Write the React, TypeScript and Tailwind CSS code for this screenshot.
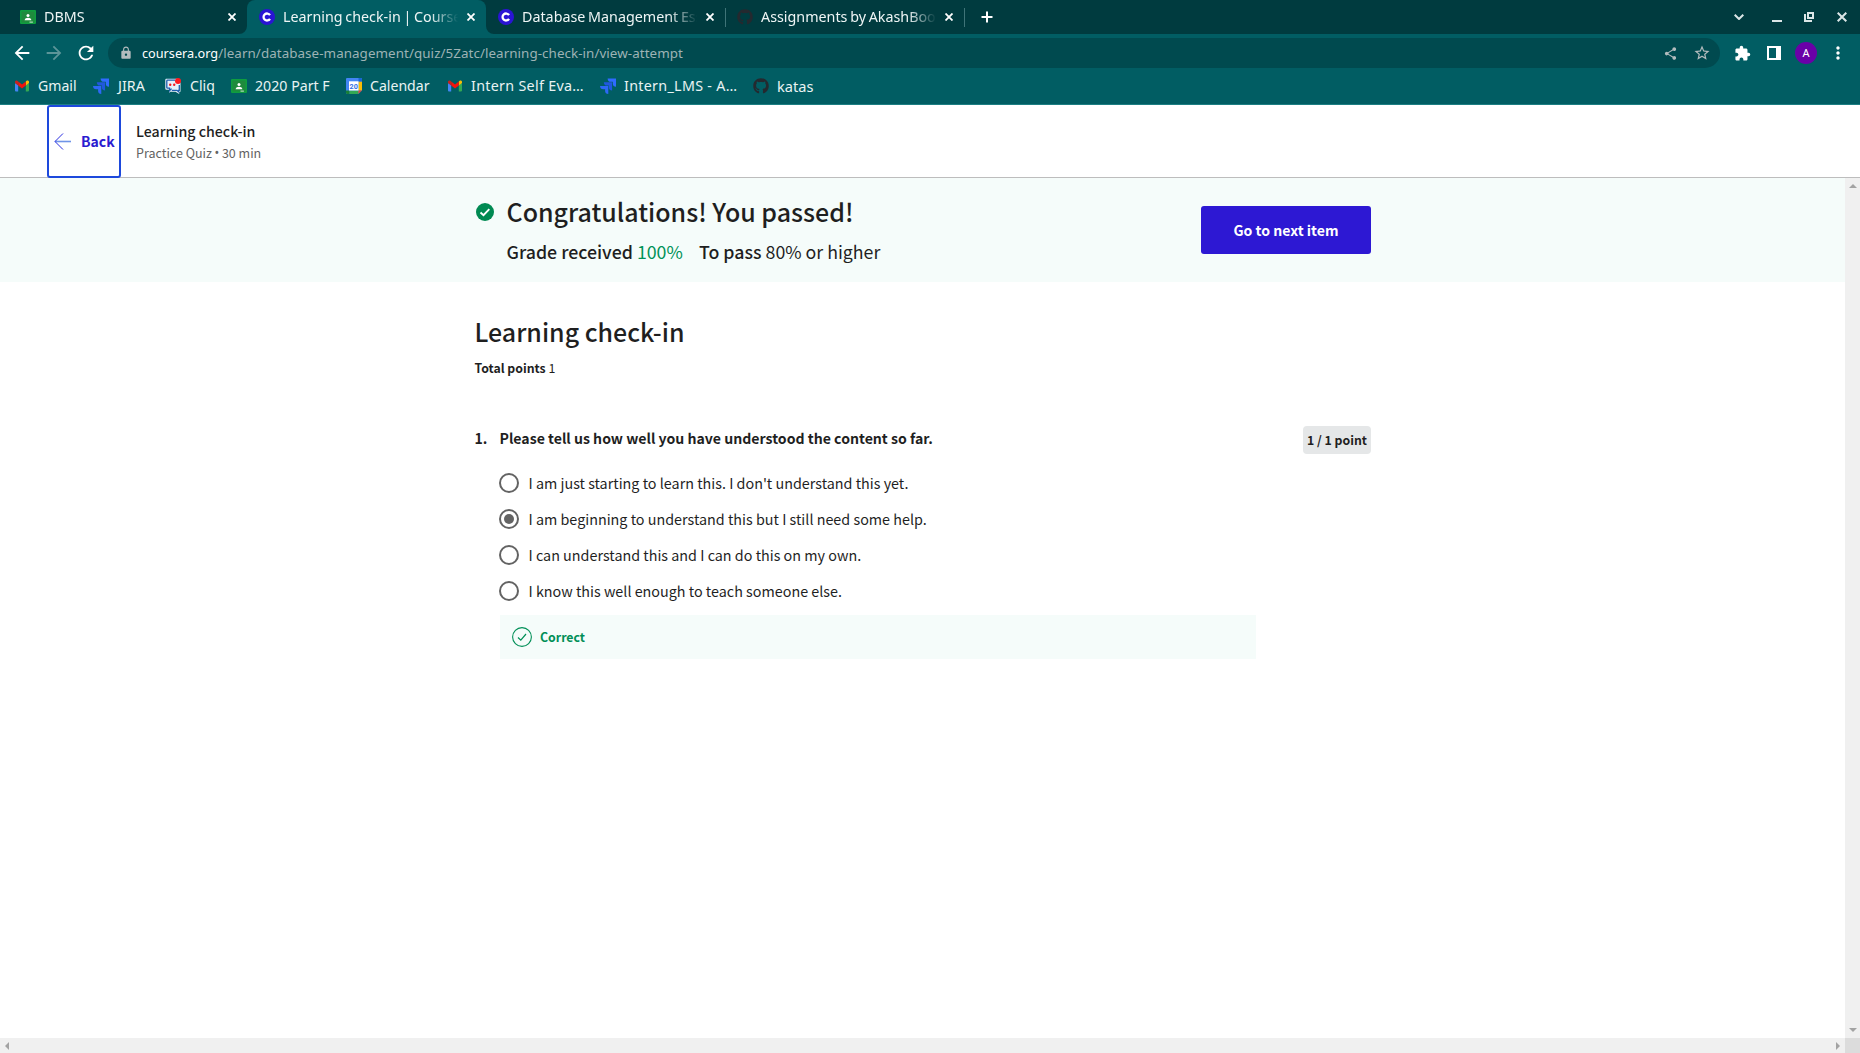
import React from "react";
import {
  MdArrowBack,
  MdArrowForward,
  MdRefresh,
  MdLock,
  MdShare,
  MdStarBorder,
  MdExtension,
  MdMoreVert,
} from "react-icons/md";
import { FaGithub } from "react-icons/fa";

const CourseraIcon = () => (
  <svg width="16" height="16" viewBox="0 0 16 16">
    <circle cx="8" cy="8" r="8" fill="#2a14d4" />
    <path d="M11 6.1A3.5 3.5 0 1 0 11 9.9" fill="none" stroke="#fff" strokeWidth="2.3" />
  </svg>
);

const ClassroomIcon = () => (
  <svg width="16" height="16" viewBox="0 0 16 16">
    <rect y="1" width="16" height="14" rx="1" fill="#0f9d3f" />
    <rect x="1.6" y="2.6" width="12.8" height="10.8" fill="#1f8a3d" />
    <circle cx="8" cy="6.4" r="1.5" fill="#fff" />
    <path d="M4.6 11.2c0-1.7 2-2.5 3.4-2.5s3.4.8 3.4 2.5z" fill="#fff" />
    <rect x="9.5" y="12.6" width="3.4" height="1" fill="#cfe8d4" />
  </svg>
);

const GmailIcon = () => (
  <svg width="14" height="12" viewBox="0 0 14 12">
    <path d="M0 3v7.6c0 .5.4.9.9.9h2.3V5z" fill="#4285f4" />
    <path d="M14 3v7.6c0 .5-.4.9-.9.9h-2.3V5z" fill="#34a853" />
    <path d="M10.8 1.5v4l3.2-2.4V2c0-1.4-1.5-1.9-2.4-1.2z" fill="#fbbc04" />
    <path d="M3.2 5.5v-4L7 4.4l3.8-2.9v4L7 8.4z" fill="#f5130b" />
    <path d="M0 2v1.1l3.2 2.4v-4L2.4.8C1.4.1 0 .7 0 2z" fill="#c5221f" />
  </svg>
);

const JiraIcon = () => (
  <svg width="16" height="16" viewBox="0 0 16 16">
    <path d="M7.6.4H16v8.4c-1.9 0-3.2-1.3-3.2-3.1V3.8h-2c-1.9 0-3.2-1.4-3.2-3.4z" fill="#2f6bff" />
    <path d="M3.8 4.2h8.3v8.3c-1.9 0-3.2-1.3-3.2-3.1V7.6H7c-1.9 0-3.2-1.4-3.2-3.4z" fill="#2058dd" />
    <path d="M0 8h8.3v8c-1.9 0-3.2-1.2-3.2-3v-1.7h-2C1.3 11.3 0 10 0 8z" fill="#2d68f5" />
  </svg>
);

const CliqIcon = () => (
  <svg width="16" height="16" viewBox="0 0 16 16">
    <path d="M1.5.8h11v11H8L4 14.8v-3H1.5A1.2 1.2 0 0 1 .3 10.6V2c0-.7.5-1.2 1.2-1.2z" fill="#e8f1f9" />
    <path d="M5.5 4.5h10v9.3h-1.3V16l-3.7-2.2h-5z" fill="#e8f1f9" />
    <path d="M10 2.2H2.6a.8.8 0 0 0-.8.8v6.4c0 .4.4.8.8.8h2v2.4l2-2" fill="none" stroke="#1f5fae" strokeWidth="1.3" />
    <path d="M6.8 12.3h5l1.7 1.4v-1.4h.8V7" fill="none" stroke="#1f5fae" strokeWidth="1.3" />
    <circle cx="5.2" cy="6.8" r="1.2" fill="#f01820" />
    <circle cx="9.2" cy="6.8" r="1.2" fill="#f01820" />
    <circle cx="13" cy="3" r="3" fill="#ff1a20" />
  </svg>
);

const CalendarIcon = () => (
  <svg width="16" height="16" viewBox="0 0 16 16">
    <rect width="16" height="16" rx="1" fill="#4285f4" />
    <path d="M12.5 3.5H16v9h-3.5z" fill="#fbbc04" />
    <path d="M12.5 0H15a1 1 0 0 1 1 1v2.5h-3.5z" fill="#1967d2" />
    <path d="M3.5 12.5h9V16h-9z" fill="#34a853" />
    <path d="M0 12.5h3.5V16H1a1 1 0 0 1-1-1z" fill="#188038" />
    <path d="M12.5 12.5H16L12.5 16z" fill="#ea4335" />
    <path d="M16 12.5V16h-3.5z" fill="#015d63" />
    <rect x="3" y="3.3" width="9.5" height="9.2" fill="#fff" />
    <text x="7.7" y="10.5" fontSize="7.2" fontWeight="700" textAnchor="middle" fill="#2f6fe4" fontFamily="Roboto, sans-serif">20</text>
  </svg>
);

const CloseIcon = () => (
  <svg width="8" height="8" viewBox="0 0 8 8" stroke="#fff" strokeWidth="1.8">
    <path d="M.5.5l7 7M7.5.5l-7 7" />
  </svg>
);

type TabProps = { icon: React.ReactNode; title: string; active?: boolean; divider?: boolean };

function Tab({ icon, title, active, divider }: TabProps) {
  return (
    <div
      className={
        active
          ? "relative flex h-[34px] w-[239px] items-center rounded-t-lg bg-[#015d63] pl-[12px]"
          : "relative flex h-[34px] w-[239px] items-center pl-[12px]"
      }
    >
      {active && (
        <>
          <svg className="absolute bottom-0 -left-2" width="8" height="8">
            <path d="M8 0v8H0a8 8 0 0 0 8-8z" fill="#015d63" />
          </svg>
          <svg className="absolute -right-2 bottom-0" width="8" height="8">
            <path d="M0 0v8h8a8 8 0 0 1-8-8z" fill="#015d63" />
          </svg>
        </>
      )}
      <span className="flex w-4 justify-center">{icon}</span>
      <span className="mb-px ml-2 w-[177px] overflow-hidden text-[14.3px] leading-[33px] whitespace-nowrap text-[#eef5f5] [word-spacing:-1px] [mask-image:linear-gradient(to_right,black_83%,transparent_99%)]">
        {title}
      </span>
      <span className="ml-[7px]">
        <CloseIcon />
      </span>
      {divider && <span className="absolute top-2 right-[-1px] h-[19px] w-px bg-[#3f7478]" />}
    </div>
  );
}

type BookmarkProps = { icon: React.ReactNode; label: string; width: string; text: string };

function Bookmark({ icon, label, width, text }: BookmarkProps) {
  return (
    <div className={`flex items-center ${width}`}>
      <span className="flex w-4 shrink-0 justify-center">{icon}</span>
      <span className={`mb-px ml-2 leading-[30px] whitespace-nowrap text-[#e9f3f3] ${text}`}>{label}</span>
    </div>
  );
}

const bookmarks: BookmarkProps[] = [
  { icon: <GmailIcon />, label: "Gmail", width: "w-[79px]", text: "text-[14.1px]" },
  { icon: <JiraIcon />, label: "JIRA", width: "w-[72px]", text: "pl-px text-[14.3px]" },
  { icon: <CliqIcon />, label: "Cliq", width: "w-[66px]", text: "pl-px text-[14.1px]" },
  { icon: <ClassroomIcon />, label: "2020 Part F", width: "w-[115px]", text: "text-[14.2px]" },
  { icon: <CalendarIcon />, label: "Calendar", width: "w-[101px]", text: "text-[14.1px]" },
  { icon: <GmailIcon />, label: "Intern Self Eva…", width: "w-[153px]", text: "text-[14.3px] tracking-[0.3px]" },
  { icon: <JiraIcon />, label: "Intern_LMS - A…", width: "w-[153px]", text: "text-[14.3px] tracking-[0.3px]" },
  { icon: <FaGithub size={16} color="#24292f" />, label: "katas", width: "w-[80px]", text: "text-[14.6px]" },
];

function BrowserChrome() {
  return (
    <div className="h-[105px] border-b border-[#1d7f83] bg-[#015d63] font-['Noto_Sans',sans-serif]">
      <div className="flex h-[34px] items-center bg-[#003b3f] pl-2">
        <Tab icon={<ClassroomIcon />} title="DBMS" />
        <Tab icon={<CourseraIcon />} title="Learning check-in | Coursera" active />
        <Tab icon={<CourseraIcon />} title="Database Management Essentials" divider />
        <Tab icon={<FaGithub size={16} color="#24292f" />} title="Assignments by AkashBoora" divider />
        <svg className="ml-[17px]" width="12" height="12" viewBox="0 0 12 12" stroke="#fff" strokeWidth="2">
          <path d="M6 .5v11M.5 6h11" />
        </svg>
        <div className="mr-[13px] ml-auto flex items-center text-[#dbe6e7]">
          <svg width="10" height="6" viewBox="0 0 10 6" fill="none" stroke="currentColor" strokeWidth="2">
            <path d="M.7.7L5 5 9.3.7" />
          </svg>
          <span className="mt-[7px] ml-[28px] h-[2px] w-[10px] bg-[#dbe6e7]" />
          <svg className="ml-[22px]" width="10" height="10" viewBox="0 0 10 10" fill="none" stroke="currentColor" strokeWidth="2">
            <path d="M4 1h5v5H4z" />
            <path d="M1 2v7h7" />
          </svg>
          <svg className="ml-[23px]" width="10" height="10" viewBox="0 0 10 10" stroke="currentColor" strokeWidth="2">
            <path d="M.7.7l8.6 8.6M9.3.7L.7 9.3" />
          </svg>
        </div>
      </div>
      <div className="flex h-[37px] items-center pt-px pl-[11px] text-white">
        <MdArrowBack size={22} />
        <MdArrowForward size={22} className="ml-[10px] text-[#5c9599]" />
        <MdRefresh size={22} className="ml-[10px]" />
        <div className="ml-[11px] flex h-[30px] w-[1612px] items-center rounded-full bg-[#004a4f] pl-[11px] text-[#b3bcbe]">
          <MdLock size={14} />
          <div className="ml-[9px] text-[13.4px] leading-[30px] whitespace-nowrap text-[#9db3b5]">
            <span className="text-[12.7px] text-white">coursera.org</span>
            <span className="tracking-[0.06px]">/learn/database-management/quiz/5Zatc/learning-check-in/view-attempt</span>
          </div>
          <MdShare size={15} className="mr-[15px] ml-auto" />
          <MdStarBorder size={18} className="mr-[9px]" />
        </div>
        <MdExtension size={17} className="ml-[14px]" />
        <svg className="ml-[16px]" width="14" height="14" viewBox="0 0 14 14">
          <path d="M0 0h14v14H0zM2 2v10h7V2z" fill="#fff" fillRule="evenodd" />
        </svg>
        <span className="ml-[14px] flex h-[22px] w-[22px] items-center justify-center rounded-full bg-[#6a00a8] text-[11px]">A</span>
        <MdMoreVert size={20} className="ml-[11px]" />
      </div>
      <div className="flex h-[30px] items-center pl-[14px]">
        {bookmarks.map((b) => (
          <Bookmark key={b.label} {...b} />
        ))}
      </div>
    </div>
  );
}

function QuizHeader() {
  return (
    <div className="flex h-[73px] border-b border-[#bdbdbd] bg-white">
      <div className="z-10 ml-[47px] flex h-[73px] w-[74px] items-center rounded-[3px] border-2 border-[#1d49dc] bg-white pl-[5px]">
        <svg className="mb-px" width="17" height="17" viewBox="0 0 17 17" fill="none">
          <path d="M1 8.5h16" stroke="#6f94e8" strokeWidth="1.6" />
          <path d="M9 .5L1 8.5l8 8" stroke="#2a2fe0" />
        </svg>
        <span className="mb-[2px] ml-[10px] text-[14px] leading-[70px] font-bold text-[#2a1bd0]">Back</span>
      </div>
      <div className="ml-[15px] pt-[15px] whitespace-nowrap">
        <div className="text-[14.2px] leading-[22px] font-medium text-[#1f1f1f]">Learning check-in</div>
        <div className="flex text-[12.5px] leading-[21px] text-[#636363]">
          <span>Practice Quiz</span>
          <span className="w-[10px] text-center font-['Noto_Sans']">•</span>
          <span>30 min</span>
        </div>
      </div>
    </div>
  );
}

function ResultBanner() {
  return (
    <div className="h-[104px] bg-[#f5fcfa]">
      <div className="ml-[475px] flex w-[896px]">
        <svg className="mt-[25px] ml-[1px]" width="18" height="18" viewBox="0 0 18 18">
          <circle cx="9" cy="9" r="9" fill="#008a52" />
          <path d="M4.5 9.5l3 2.7 5.8-6" fill="none" stroke="#fff" strokeWidth="1.9" />
        </svg>
        <div className="ml-[12.5px] whitespace-nowrap">
          <div className="mt-[15px] text-[24.98px] leading-[36px] font-medium">Congratulations! You passed!</div>
          <div className="mt-[6px] flex text-[17.75px] leading-[32px]">
            <div className="w-[192.5px]">
              <span className="font-medium">Grade received</span>{" "}
              <span className="text-[#009258]">100%</span>
            </div>
            <div>
              <span className="font-medium">To pass</span> <span>80% or higher</span>
            </div>
          </div>
        </div>
        <div className="mt-[28px] ml-auto flex h-[48px] w-[170px] items-center justify-center rounded-[3px] bg-[#2d18d3] pt-[2px] text-[14.08px] font-bold text-white">
          Go to next item
        </div>
      </div>
    </div>
  );
}

const options = [
  "I am just starting to learn this. I don't understand this yet.",
  "I am beginning to understand this but I still need some help.",
  "I can understand this and I can do this on my own.",
  "I know this well enough to teach someone else.",
];

function Question() {
  return (
    <div className="mt-[45px] flex items-start">
      <div className="-mt-[2px] -ml-[0.5px] w-[25.5px] text-[14.1px] leading-[28px] font-bold">1.</div>
      <div className="-mt-[2px] w-[756px]">
        <div className="-ml-[0.5px] text-[14.1px] leading-[28px] font-bold">
          Please tell us how well you have understood the content so far.
        </div>
        <div className="mt-[13px]">
          {options.map((label, i) => (
            <div key={label} className="-ml-px flex h-[36px] items-center">
              <span className="flex h-[20px] w-[20px] items-center justify-center rounded-full border-2 border-[#636363]">
                {i === 1 && <span className="h-[10px] w-[10px] rounded-full bg-[#636363]" />}
              </span>
              <span className="ml-[9.5px] text-[14.35px] leading-[36px]">{label}</span>
            </div>
          ))}
        </div>
        <div className="mt-[6px] flex h-[44px] items-center bg-[#f5fcfa] pl-3 text-[#008f57]">
          <svg width="20" height="20" viewBox="0 0 20 20" fill="none" stroke="currentColor">
            <circle cx="10" cy="10" r="9.4" strokeWidth="1.1" />
            <path d="M6 10.5l2.8 2.7L14 7" strokeWidth="1.2" />
          </svg>
          <span className="ml-2 text-[12.3px] font-bold">Correct</span>
        </div>
      </div>
      <div className="ml-auto flex h-[28px] w-[68px] items-center justify-center rounded bg-[#e5e7e8] text-[12.3px] font-bold">
        1 / 1 point
      </div>
    </div>
  );
}

function Page() {
  return (
    <div className="flex h-[875px]">
      <div className="flex w-[1845px] flex-col">
        <div className="flex-1">
          <ResultBanner />
          <div className="ml-[475px] w-[896px]">
            <div className="-ml-[0.5px] pt-[31px] text-[24.95px] leading-[36px] font-medium">Learning check-in</div>
            <div className="mt-[6px] -ml-[0.5px] text-[12.45px] leading-[26px]">
              <span className="text-[12.3px] font-bold">Total points</span> 1
            </div>
            <Question />
          </div>
        </div>
        <div className="flex h-[15px] items-center justify-between bg-[#f0f0f0] px-[5px]">
          <svg width="4" height="8"><path d="M4 0v8L0 4z" fill="#a3a3a3" /></svg>
          <svg width="4" height="8"><path d="M0 0v8l4-4z" fill="#a3a3a3" /></svg>
        </div>
      </div>
      <div className="flex w-[15px] flex-col items-center bg-[#f0f0f0]">
        <svg className="mt-[6px]" width="8" height="4"><path d="M0 4h8L4 0z" fill="#a3a3a3" /></svg>
        <svg className="mt-auto mb-[6px]" width="8" height="4"><path d="M0 0h8L4 4z" fill="#a3a3a3" /></svg>
        <div className="h-[15px] w-[15px] bg-[#dcdcdc]" />
      </div>
    </div>
  );
}

export default function App() {
  return (
    <div className="h-[1053px] w-[1860px] overflow-hidden bg-white font-['Noto_Sans_CJK_SC',sans-serif] text-[#1f1f1f]">
      <BrowserChrome />
      <QuizHeader />
      <Page />
    </div>
  );
}
